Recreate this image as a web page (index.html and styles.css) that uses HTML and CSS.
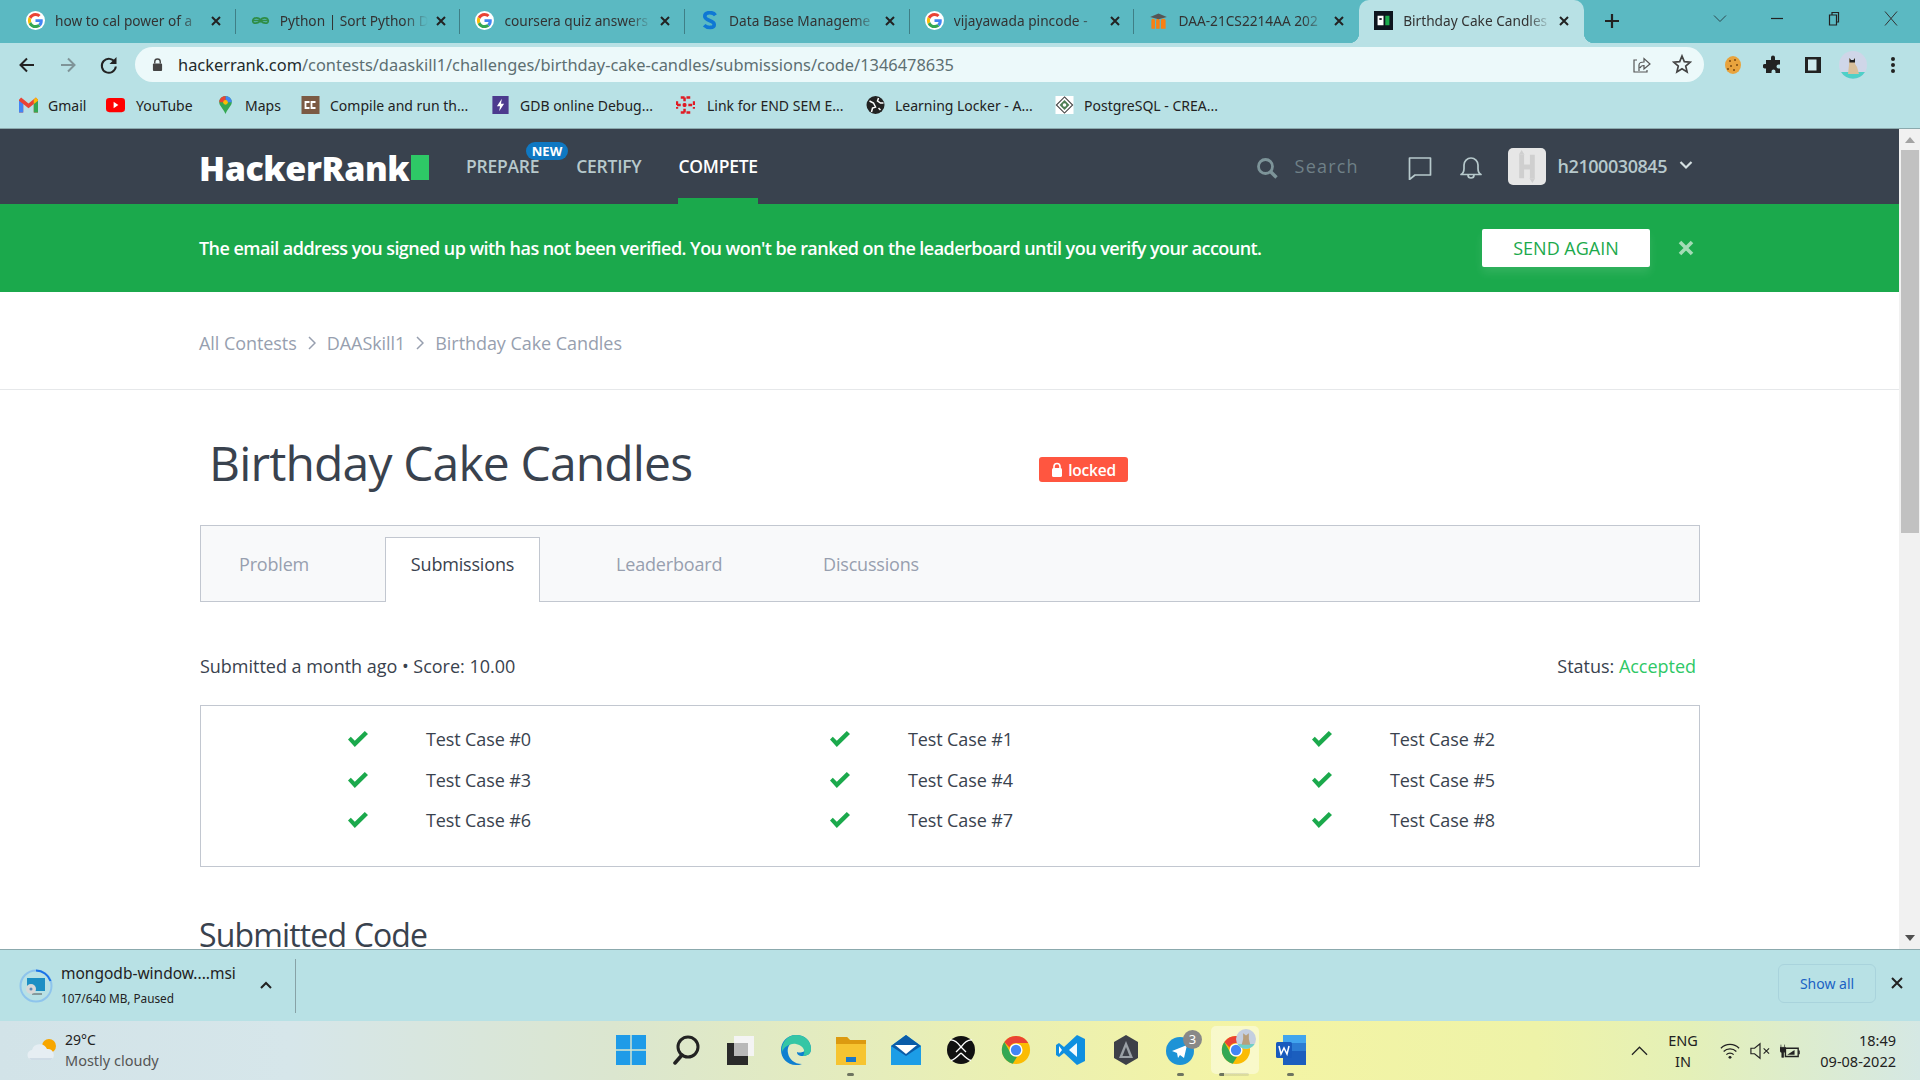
FILE: index.html
```html
<!DOCTYPE html>
<html lang="en">
<head>
<meta charset="utf-8">
<title>Birthday Cake Candles</title>
<link rel="stylesheet" href="styles.css">
</head>
<body>
<svg class="defs" width="0" height="0" aria-hidden="true">
  <symbol id="g" viewBox="-6 -6 60 60">
    <circle cx="24" cy="24" r="30" fill="#fff"/>
    <path fill="#EA4335" d="M24 9.500c3.540 0 6.710 1.220 9.210 3.600l6.850-6.850C35.900 2.380 30.470 0 24 0 14.620 0 6.510 5.380 2.560 13.220l7.980 6.190C12.430 13.720 17.740 9.500 24 9.500z"/>
    <path fill="#4285F4" d="M46.980 24.550c0-1.570-.15-3.090-.38-4.550H24v9.020h12.940c-.58 2.960-2.260 5.480-4.780 7.180l7.730 6c4.510-4.180 7.090-10.360 7.090-17.650z"/>
    <path fill="#FBBC05" d="M10.530 28.590c-.48-1.450-.76-2.990-.76-4.590s.27-3.140.76-4.590l-7.980-6.190C.92 16.460 0 20.120 0 24c0 3.880.92 7.540 2.560 10.780l7.970-6.190z"/>
    <path fill="#34A853" d="M24 48c6.480 0 11.930-2.130 15.890-5.810l-7.730-6c-2.150 1.450-4.920 2.300-8.160 2.300-6.260 0-11.570-4.220-13.470-9.910l-7.980 6.190C6.510 42.620 14.620 48 24 48z"/>
  </symbol>
  <symbol id="x" viewBox="0 0 12 12"><path d="M2 2l8 8M10 2l-8 8" stroke="currentColor" stroke-width="2" fill="none"/></symbol>
  <symbol id="check" viewBox="0 0 20 16"><path fill="#1ba94c" d="M0 8.500l2.800-2.800 4 4L16.800 0 20 3 6.800 16z"/></symbol>
  <symbol id="chrome" viewBox="0 0 32 32">
    <circle cx="16" cy="16" r="15" fill="#fbbc04"/>
    <path d="M16 1a15 15 0 0 1 13 7.500H16a7.500 7.500 0 0 0-7 4.500L3.500 7.500A15 15 0 0 1 16 1z" fill="#ea4335"/>
    <path d="M3.500 7.500L10 19a7.500 7.500 0 0 0 7 4.400L12.500 30.600A15 15 0 0 1 3.500 7.500z" fill="#34a853"/>
    <circle cx="16" cy="16" r="7" fill="#fff"/><circle cx="16" cy="16" r="5.500" fill="#4285f4"/>
  </symbol>
</svg>

<header class="chrome">
  <div class="tabstrip">
    <div class="tab"><svg class="fav"><use href="#g"/></svg><span class="tab-title">how to cal power of a</span><svg class="tab-x"><use href="#x"/></svg></div>
    <div class="tab"><svg class="fav" viewBox="0 0 16 16"><path d="M8 8c-1-3-6-3-6.500 0S6 11 8 8c2 3 7 3 6.500 0S9 5 8 8zM1.500 8h13" fill="none" stroke="#2f8d46" stroke-width="1.400"/></svg><span class="tab-title">Python | Sort Python D</span><svg class="tab-x"><use href="#x"/></svg></div>
    <div class="tab"><svg class="fav"><use href="#g"/></svg><span class="tab-title">coursera quiz answers</span><svg class="tab-x"><use href="#x"/></svg></div>
    <div class="tab"><svg class="fav" viewBox="0 0 16 16"><path d="M13 3.500C11 .5 4 .5 4 4.500c0 4 8 3 8 7 0 3-6 3-8.500.5" fill="none" stroke="#0f78d4" stroke-width="3"/></svg><span class="tab-title">Data Base Manageme</span><svg class="tab-x"><use href="#x"/></svg></div>
    <div class="tab"><svg class="fav"><use href="#g"/></svg><span class="tab-title">vijayawada pincode -</span><svg class="tab-x"><use href="#x"/></svg></div>
    <div class="tab tab-last"><svg class="fav" viewBox="0 0 16 16"><path d="M2 15V8c0-2 3-2 3 0v7zM6 15V8c0-2 3-2 3 0v7zM10 15V8c0-2 4-2 4 0v7z" fill="#f98012"/><path d="M1 5l7-3 7 3-7 2z" fill="#555"/></svg><span class="tab-title">DAA-21CS2214AA 202</span><svg class="tab-x"><use href="#x"/></svg></div>
    <div class="tab tab-active"><svg class="fav" viewBox="0 0 16 16"><rect width="16" height="16" fill="#0e141e"/><rect x="3" y="4" width="5" height="8" fill="#fff"/><rect x="4.500" y="6" width="2" height="1.500" fill="#0e141e"/><rect x="9.500" y="4" width="3.500" height="8" fill="#1ba94c"/></svg><span class="tab-title">Birthday Cake Candles</span><svg class="tab-x"><use href="#x"/></svg></div>
    <svg class="newtab" viewBox="0 0 16 16"><path d="M8 1v14M1 8h14" stroke="#222" stroke-width="2.200"/></svg>
    <div class="winctl">
      <svg viewBox="0 0 14 14"><path d="M1 4l6 6 6-6" fill="none" stroke="#2c4a50"/></svg>
      <svg viewBox="0 0 14 14"><path d="M1 7h12" stroke="#222" stroke-width="1.200"/></svg>
      <svg viewBox="0 0 14 14"><path d="M2.500 3.500h7v10h-7zM5 3.500V1h6.500v9.500H9.500" fill="none" stroke="#222" stroke-width="1.200"/></svg>
      <svg viewBox="0 0 14 14"><path d="M1 0l12 14M13 0L1 14" stroke="#333" stroke-width="1"/></svg>
    </div>
  </div>
  <div class="toolbar">
    <svg class="tool" viewBox="0 0 20 20"><path d="M17 10H4M10 3.500L3.500 10l6.500 6.500" fill="none" stroke="#222" stroke-width="2"/></svg>
    <svg class="tool" viewBox="0 0 20 20"><path d="M3 10h13M10 3.500l6.500 6.500-6.500 6.500" fill="none" stroke="#7f9498" stroke-width="2"/></svg>
    <svg class="tool" viewBox="0 0 20 20"><path d="M16 7.500a7 7 0 1 0 .8 4" fill="none" stroke="#222" stroke-width="2"/><path d="M17.500 2v7h-7z" fill="#222"/></svg>
    <div class="omnibox">
      <svg class="lock" viewBox="0 0 12 14"><path d="M3 6V4a3 3 0 0 1 6 0v2" fill="none" stroke="#444" stroke-width="1.500"/><rect x="1" y="6" width="10" height="8" rx="1" fill="#444"/></svg>
      <span class="url"><b>hackerrank.com</b>/contests/daaskill1/challenges/birthday-cake-candles/submissions/code/1346478635</span>
      <svg class="omni-ic" viewBox="0 0 20 20"><path d="M7 17V11c0-2 2-3 5-3V4.500l6 5.500-6 5v-3.500c-2 0-3.500 1-4 2.500M5 6H2v12h13v-2" fill="none" stroke="#555" stroke-width="1.200"/></svg>
      <svg class="omni-ic" viewBox="0 0 20 20"><path d="M10 2l2.300 5.600 6 .5-4.600 3.900 1.400 5.900-5.100-3.100-5.100 3.100 1.400-5.900L1.700 8.100l6-.5z" fill="none" stroke="#444" stroke-width="1.700"/></svg>
    </div>
    <div class="ext">
      <svg viewBox="0 0 20 20"><ellipse cx="10" cy="10" rx="8" ry="9" fill="#e8a33d"/><g fill="#7a4a12"><circle cx="7" cy="6" r="1"/><circle cx="12" cy="5" r="1"/><circle cx="14" cy="10" r="1"/><circle cx="8" cy="11" r="1"/><circle cx="11" cy="15" r="1"/><circle cx="5" cy="14" r="1"/></g></svg>
      <svg viewBox="0 0 20 20"><path d="M8 2.500a2 2 0 0 1 4 0V5h5v4.500h-1.500a2 2 0 0 0 0 4H17V18H12.500v-1.500a2 2 0 0 0-4 0V18H3v-4.500H1.500a2.300 2.300 0 0 1 0-4.500H3V5h5z" fill="#222"/></svg>
      <svg viewBox="0 0 20 20"><path d="M2 2h16v16H2z" fill="#222"/><path d="M5 4.500h8.500v11H5z" fill="#d0eaee"/></svg>
      <svg class="avatar" viewBox="0 0 28 28"><circle cx="14" cy="14" r="14" fill="#cfd6e8"/><path d="M2 21h24a14 14 0 0 1-24 0z" fill="#4fd0c8"/><path d="M10 7l1.500 2h3L16 7v6l2 3 2 7H9l1-9z" fill="#d8bf9a"/><path d="M10.500 7l1.500 2h2.500L16 7v4.500h-5.500z" fill="#222"/></svg>
      <svg viewBox="0 0 20 20"><g fill="#222"><circle cx="10" cy="4" r="2"/><circle cx="10" cy="10" r="2"/><circle cx="10" cy="16" r="2"/></g></svg>
    </div>
  </div>
  <div class="bookmarks">
    <a class="bm bm-1"><svg viewBox="0 0 18 14"><path d="M0 2v12h4V6l5 4 5-4v8h4V2l-2-2-7 5.500L2 0z" fill="#ea4335"/><path d="M0 3v11h4V6z" fill="#4285f4"/><path d="M14 6v8h4V3z" fill="#34a853"/><path d="M14 2l2-2 2 2v1l-4 3z" fill="#fbbc04"/></svg>Gmail</a>
    <a class="bm bm-2"><svg viewBox="0 0 20 16"><rect width="20" height="15" y=".5" rx="3.500" fill="#f00"/><path d="M8 4.500l5 3.500-5 3.500z" fill="#fff"/></svg>YouTube</a>
    <a class="bm bm-3"><svg viewBox="0 0 14 20"><path d="M7 0a7 7 0 0 1 7 7c0 4-4 6-7 13C4 13 0 11 0 7a7 7 0 0 1 7-7z" fill="#34a853"/><path d="M7 0a7 7 0 0 1 7 7H7z" fill="#4285f4"/><path d="M0 7a7 7 0 0 1 7-7v7z" fill="#ea4335"/><circle cx="7" cy="7" r="2.600" fill="#fbbc04"/></svg>Maps</a>
    <a class="bm bm-4"><svg viewBox="0 0 18 18"><rect width="18" height="18" fill="#7b5a44"/><path d="M8 6H4v6h4M14 6h-4v6h4" fill="none" stroke="#fff" stroke-width="1.800"/></svg>Compile and run th...</a>
    <a class="bm bm-5"><svg viewBox="0 0 18 20"><rect width="18" height="20" fill="#4c3a8e"/><path d="M10.500 3L5 11.500h3.500L7.500 17 13 8.500H9.500z" fill="#fff"/></svg>GDB online Debug...</a>
    <a class="bm bm-6"><svg viewBox="0 0 20 18"><path d="M5 1h10M5 17h10M1 5v8M19 5v8M9 1v16M1 9h18" fill="none" stroke="#e01b24" stroke-width="2.600" stroke-dasharray="4 2"/></svg>Link for END SEM E...</a>
    <a class="bm bm-7"><svg viewBox="0 0 18 18"><circle cx="9" cy="9" r="9" fill="#222"/><path d="M3 5l4 2 2 4-3 1-1 4M12 2l-1 3 3 2 3 0M12 12l2 2" fill="none" stroke="#fff" stroke-width="1.500"/></svg>Learning Locker - A...</a>
    <a class="bm bm-8"><svg viewBox="0 0 20 20"><rect width="20" height="20" fill="#fff"/><path d="M10 1l9 9-9 9-9-9z" fill="none" stroke="#444" stroke-width="1.200"/><path d="M10 4.500l5.500 5.500-5.500 5.500L4.500 10z" fill="#4f7f55"/><circle cx="10" cy="10" r="2" fill="#fff"/></svg>PostgreSQL - CREA...</a>
  </div>
</header>

<div class="viewport">
  <main class="page">
    <nav class="topnav">
      <div class="logo">HackerRank<span class="logo-sq"></span></div>
      <a class="nav-item nav-prepare">PREPARE<span class="new-badge">NEW</span></a>
      <a class="nav-item nav-certify">CERTIFY</a>
      <a class="nav-item nav-active">COMPETE</a>
      <div class="nav-right">
        <svg class="nav-search-ic" viewBox="0 0 22 22"><circle cx="9.500" cy="9.500" r="7" fill="none" stroke="#7d9499" stroke-width="2.800"/><path d="M14.500 14.500l6 6" stroke="#7d9499" stroke-width="3.400"/></svg>
        <span class="nav-search">Search</span>
        <svg class="nav-chat" viewBox="0 0 24 24"><path d="M1.500 2h21v17H7l-5.500 4.500z" fill="none" stroke="#b7c9cc" stroke-width="1.700" stroke-linejoin="round"/></svg>
        <svg class="nav-bell" viewBox="0 0 24 24"><path d="M2 18.500c2-1 3-3 3-6V9a7 7 0 0 1 14 0v3.500c0 3 1 5 3 6zM9 19a3 3 0 0 0 6 0" fill="none" stroke="#b7c9cc" stroke-width="1.700" stroke-linejoin="round"/></svg>
        <div class="nav-avatar"><svg viewBox="0 0 38 38"><path d="M11 7h5v10h6V7h5v24h-5V22h-6v9h-5z" fill="#cfcfcf"/><path d="M13.500 2l3 5h-6zM24.500 36l3-5h-6z" fill="#cfcfcf"/></svg></div>
        <span class="nav-user">h2100030845</span>
        <svg class="nav-caret" viewBox="0 0 14 10"><path d="M1.500 2L7 7.500 12.500 2" fill="none" stroke="#d5e0e2" stroke-width="2.200"/></svg>
      </div>
    </nav>
    <div class="verify">
      <p class="verify-text">The email address you signed up with has not been verified. You won't be ranked on the leaderboard until you verify your account.</p>
      <button class="send-again">SEND AGAIN</button>
      <svg class="verify-x" viewBox="0 0 16 16"><path d="M2 2l12 12M14 2L2 14" stroke="#a4dcb6" stroke-width="3.600"/></svg>
    </div>
    <div class="crumbs">
      <a>All Contests</a><svg viewBox="0 0 8 14"><path d="M1 1l6 6-6 6" fill="none" stroke="#979faf" stroke-width="1.500"/></svg>
      <a>DAASkill1</a><svg viewBox="0 0 8 14"><path d="M1 1l6 6-6 6" fill="none" stroke="#979faf" stroke-width="1.500"/></svg>
      <a>Birthday Cake Candles</a>
    </div>
    <div class="content">
      <div class="title-row">
        <h1>Birthday Cake Candles</h1>
        <span class="locked"><svg viewBox="0 0 12 15"><path d="M3 7V4.500a3 3 0 0 1 6 0V7" fill="none" stroke="#fff" stroke-width="1.600"/><rect x="1" y="6" width="10" height="9" rx="1.500" fill="#fff"/></svg>locked</span>
      </div>
      <div class="tabs">
        <a class="ctab ctab-problem">Problem</a>
        <a class="ctab ctab-on">Submissions</a>
        <a class="ctab ctab-leader">Leaderboard</a>
        <a class="ctab ctab-disc">Discussions</a>
      </div>
      <div class="status-row">
        <span class="submitted">Submitted a month ago • Score: 10.00</span>
        <span class="status">Status: <em>Accepted</em></span>
      </div>
      <div class="cases">
        <div class="case"><svg><use href="#check"/></svg>Test Case #0</div>
        <div class="case"><svg><use href="#check"/></svg>Test Case #1</div>
        <div class="case"><svg><use href="#check"/></svg>Test Case #2</div>
        <div class="case"><svg><use href="#check"/></svg>Test Case #3</div>
        <div class="case"><svg><use href="#check"/></svg>Test Case #4</div>
        <div class="case"><svg><use href="#check"/></svg>Test Case #5</div>
        <div class="case"><svg><use href="#check"/></svg>Test Case #6</div>
        <div class="case"><svg><use href="#check"/></svg>Test Case #7</div>
        <div class="case"><svg><use href="#check"/></svg>Test Case #8</div>
      </div>
      <h2>Submitted Code</h2>
    </div>
  </main>
  <div class="scrollbar">
    <svg class="sb-arrow" viewBox="0 0 10 6"><path d="M5 0l5 6H0z" fill="#a3a3a3"/></svg>
    <div class="sb-thumb"></div>
    <svg class="sb-arrow sb-down" viewBox="0 0 10 6"><path d="M0 0h10L5 6z" fill="#505050"/></svg>
  </div>
</div>

<section class="downloads">
  <svg class="dl-icon" viewBox="0 0 34 34">
    <circle cx="17" cy="17" r="15.500" fill="none" stroke="#8ec4ec" stroke-width="2"/>
    <path d="M17 1.500A15.500 15.500 0 0 1 31.500 12" fill="none" stroke="#1a73e8" stroke-width="2"/>
    <rect x="8" y="9" width="18" height="13" fill="#1c8fc4"/>
    <path d="M13 25h10" stroke="#555" stroke-width="1"/>
    <circle cx="12" cy="20" r="5" fill="#d8d8d8"/><circle cx="12" cy="20" r="1.500" fill="#5a88b8"/>
  </svg>
  <div class="dl-text">
    <div class="dl-name">mongodb-window....msi</div>
    <div class="dl-size">107/640 MB, Paused</div>
  </div>
  <svg class="dl-caret" viewBox="0 0 12 8"><path d="M1 7l5-5 5 5" fill="none" stroke="#222" stroke-width="2"/></svg>
  <div class="dl-sep"></div>
  <a class="dl-all">Show all</a>
  <svg class="dl-x" viewBox="0 0 12 12"><path d="M1 1l10 10M11 1L1 11" stroke="#222" stroke-width="2"/></svg>
</section>

<footer class="taskbar">
  <div class="weather">
    <svg viewBox="0 0 30 24"><circle cx="22" cy="8" r="7" fill="#f7a600"/><path d="M6 22a5 5 0 0 1-1-10 8 8 0 0 1 15-1 6 6 0 0 1 4 11z" fill="#e6eef3"/><path d="M2 20h24l-2 2H4z" fill="#cfdce6"/></svg>
    <div><div class="w-temp">29°C</div><div class="w-desc">Mostly cloudy</div></div>
  </div>
  <div class="apps">
    <span class="app"><svg viewBox="0 0 30 30"><path d="M0 0h14.300v14.300H0zM15.700 0H30v14.300H15.700zM0 15.700h14.300V30H0zM15.700 15.700H30V30H15.700z" fill="#1e9be8"/></svg></span>
    <span class="app"><svg viewBox="0 0 30 30"><circle cx="17" cy="12" r="10" fill="none" stroke="#222" stroke-width="3"/><path d="M11 20l-7 8" stroke="#222" stroke-width="3.500" stroke-linecap="round"/></svg></span>
    <span class="app"><svg viewBox="0 0 30 30"><rect x="8" y="1" width="20" height="20" fill="#f4f4f4"/><rect x="1" y="8" width="21" height="22" fill="#2a2a2a"/><rect x="8" y="8" width="14" height="13" fill="#b8b8b8"/></svg></span>
    <span class="app"><svg viewBox="0 0 30 30"><path d="M15 0c9 0 15 6 15 14 0 5-4 7-8 7-5 0-6-2-6-4 2 1 8 1 8-3 0-5-5-8-10-7C8 8 6 13 7 18c1 6 6 11 14 11-2 1-4 1-6 1C6 30 0 23 0 15S6 0 15 0z" fill="#0f7fd0"/><path d="M15 0c9 0 15 6 15 14 0 5-4 7-8 7 2-2 3-10-7-12C9 8 3 12 1 17 0 8 6 0 15 0z" fill="#35c6a5"/></svg></span>
    <span class="app app-dot"><svg viewBox="0 0 30 30"><path d="M0 2h11l3 3h16v25H0z" fill="#f6c431"/><path d="M0 2h11l3 3h16v4H0z" fill="#dc9a10"/><rect x="10" y="22" width="10" height="5" fill="#1a78c8"/></svg></span>
    <span class="app"><svg viewBox="0 0 30 30"><path d="M0 11L15 0l15 11v19H0z" fill="#1c9de6"/><path d="M0 11l15 10 15-10L15 0z" fill="#0a5ca8"/><path d="M4 10h22l-11 9z" fill="#fff"/></svg></span>
    <span class="app"><svg viewBox="0 0 30 30"><circle cx="15" cy="15" r="14" fill="#111"/><path d="M15 12C12 8 8 4.500 4 5M15 12c3-4 7-7.500 11-7M15 18c-4 4-7 7-10 7.500M15 18c4 4 7 7 10 7.500M15 12l-5 5M15 12l5 5" fill="none" stroke="#fff" stroke-width="1.300"/></svg></span>
    <span class="app"><svg><use href="#chrome"/></svg></span>
    <span class="app"><svg viewBox="0 0 30 30"><path d="M21 0l8 4v22l-8 4-13-12-5 4-3-2v-10l3-2 5 4z" fill="#0f8fe0"/><path d="M21 8l-8 7 8 7z" fill="#fff" opacity=".95"/><path d="M3 11l3 4-3 4z" fill="#fff"/></svg></span>
    <span class="app"><svg viewBox="0 0 30 30"><path d="M15 0l12 7v16l-12 7-12-7V7z" fill="#3d4048"/><path d="M15 6l7 17H8z" fill="#9aa0a6"/><path d="M15 12l3.500 9h-7z" fill="#3d4048"/></svg></span>
    <span class="app app-dot app-tg"><svg viewBox="0 0 30 30"><circle cx="14" cy="16" r="14" fill="#1d93d6"/><path d="M6 16l15-6-3 13-4-3-2 3-1-5z" fill="#fff"/></svg><i class="tg-badge">3</i></span>
    <span class="app app-open"><svg><use href="#chrome"/></svg><svg class="chrome-av" viewBox="0 0 28 28"><circle cx="14" cy="14" r="14" fill="#c4cfe0"/><path d="M2 21h24a14 14 0 0 1-24 0z" fill="#6fd0c8"/><path d="M10 6l4 3 4-3v8l2 8H8l2-8z" fill="#b89f7c"/></svg></span>
    <span class="app app-dot"><svg viewBox="0 0 30 30"><path d="M7 0h23v30H7z" fill="#1b5ebe"/><path d="M7 0h23v8H7z" fill="#41a5ee"/><path d="M7 8h23v8H7z" fill="#2b7cd3"/><rect y="7" width="16" height="16" rx="1.500" fill="#185abd"/><path d="M3 11l2 8 3-6 3 6 2-8" fill="none" stroke="#fff" stroke-width="1.500"/></svg></span>
  </div>
  <div class="tray">
    <svg class="tray-up" viewBox="0 0 18 10"><path d="M1 9l8-8 8 8" fill="none" stroke="#222" stroke-width="1.300"/></svg>
    <div class="lang">ENG<br>IN</div>
    <svg class="tray-ic" viewBox="0 0 22 18"><path d="M1 6a14 14 0 0 1 20 0M4 9.500a10 10 0 0 1 14 0M7 13a5.500 5.500 0 0 1 8 0" fill="none" stroke="#222" stroke-width="1.400"/><circle cx="11" cy="16" r="1.600" fill="#222"/></svg>
    <svg class="tray-ic" viewBox="0 0 22 18"><path d="M1 6h4l6-5v16l-6-5H1z" fill="none" stroke="#222" stroke-width="1.300"/><path d="M15 6l6 6M21 6l-6 6" stroke="#222" stroke-width="1.200"/></svg>
    <svg class="tray-ic" viewBox="0 0 22 18"><path d="M6 6h14v9H6z" fill="none" stroke="#222" stroke-width="1.500"/><path d="M21 8.500v4" stroke="#222" stroke-width="1.500"/><path d="M8 13l8-5v5z" fill="#222"/><path d="M1 2v3M5 2v3M0 5h6v3a3 3 0 0 1-2 3v5H2v-5a3 3 0 0 1-2-3z" fill="#222" stroke="#222" stroke-width=".7"/></svg>
    <div class="clock">18:49<br>09-08-2022</div>
  </div>
</footer>
</body>
</html>
```
FILE: styles.css
```css
* { box-sizing: border-box; }
html, body { margin: 0; height: 100%; }
body {
  display: flex;
  flex-direction: column;
  width: 1920px;
  height: 1080px;
  overflow: hidden;
  background: #fff;
  font-family: "Open Sans", "Noto Sans", sans-serif;
  color: #39424e;
}
.defs { position: absolute; }
a { color: inherit; text-decoration: none; }

/* browser chrome */
.chrome { flex: 0 0 129px; background: #b8e1e5; border-bottom: 1px solid #8ba9ad; font-family: "Noto Sans", sans-serif; color: #222; }
.tabstrip { height: 43px; background: #5bb9c2; display: flex; padding-left: 11px; }
.tab { flex: 0 0 224.700px; height: 43px; display: flex; align-items: center; padding: 0 0 2px 15px; position: relative; font-size: 13.700px; }
.tab::after { content: ""; position: absolute; right: 0; top: 9px; height: 25px; width: 1px; background: #3f7f86; }
.tab-last::after { display: none; }
.tab-active { background: #b8e1e5; border-radius: 10px 10px 0 0; }
.tab-active::after { display: block; right: -10px; top: 33px; width: 10px; height: 10px; background: radial-gradient(circle at 100% 0, transparent 10px, #b8e1e5 10.500px); }
.tab-active::before { content: ""; position: absolute; left: -10px; top: 33px; width: 10px; height: 10px; background: radial-gradient(circle at 0 0, transparent 10px, #b8e1e5 10.500px); }
.fav { width: 19px; height: 19px; flex: none; }
.tab-title { width: 148px; margin-left: 10px; white-space: nowrap; overflow: hidden; color: #333;
  -webkit-mask-image: linear-gradient(90deg, #000 84%, transparent); mask-image: linear-gradient(90deg, #000 84%, transparent); }
.tab-x { width: 12px; height: 12px; margin-left: 7px; flex: none; color: #222; }
.newtab { width: 16px; height: 16px; margin: 13px 0 0 20px; }
.winctl { margin-left: auto; display: flex; height: 43px; align-items: flex-start; padding: 11px 22px 0 0; gap: 43px; }
.winctl svg { width: 14px; height: 15px; flex: none; }

.toolbar { height: 43px; display: flex; align-items: center; padding: 0 20px 0 17px; }
.tool { width: 20px; height: 20px; margin-right: 21px; flex: none; }
.omnibox { height: 35px; flex: 0 0 1569px; margin: -1px 0 0 -5px; border-radius: 18px; background: #ecf9fa; display: flex; align-items: center; padding-left: 17px; }
.lock { width: 11px; height: 13px; flex: none; }
.url { margin-left: 15px; font-size: 16.400px; color: #5d6f72; white-space: nowrap; }
.url b { font-weight: 400; color: #1e2a2c; }
.omni-ic { width: 20px; height: 20px; flex: none; }
.url + .omni-ic { margin-left: auto; margin-right: 20px; }
.omni-ic:last-child { margin-right: 12px; }
.ext { display: flex; align-items: center; margin-left: 19px; gap: 20px; }
.ext svg { width: 20px; height: 20px; flex: none; }
.ext .avatar { width: 28px; height: 28px; margin: 0 -4px; }

.bookmarks { height: 42px; display: flex; align-items: center; padding: 0 0 4px 19px; font-size: 14px; color: #222; }
.bm { display: flex; align-items: center; gap: 10px; white-space: nowrap; height: 20px; }
.bm svg { width: 19px; height: 18px; flex: none; }
.bm-1 { width: 87px; } .bm-2 { width: 110px; } .bm-3 { width: 85px; } .bm-4 { width: 190px; }
.bm-5 { width: 185px; } .bm-6 { width: 190px; } .bm-7 { width: 189px; } .bm-8 { width: 200px; }
.bm-2 svg { margin-right: 1px; }
.bm-6 svg { margin-right: 2px; }

/* page */
.viewport { flex: 1; display: flex; min-height: 0; }
.page { flex: 1; min-width: 0; overflow: hidden; }
.scrollbar { flex: 0 0 21px; background: #f1f1f1; display: flex; flex-direction: column; align-items: center; position: relative; padding-top: 8px; }
.sb-arrow { width: 10px; height: 6px; flex: none; }
.sb-thumb { width: 18px; height: 383px; margin-top: 7px; background: #c1c1c1; }
.sb-down { margin-top: auto; margin-bottom: 8px; }

.topnav { height: 75px; background: #39424e; display: flex; align-items: center; padding-left: 199px; position: relative; }
.logo { width: 267px; font-size: 34px; font-weight: 800; color: #fff; display: flex; align-items: center; line-height: 1; letter-spacing: -.4px; padding-top: 2px; }
.logo-sq { width: 18px; height: 25px; background: #2ec866; margin-left: 2px; }
.nav-item { font-size: 17.500px; font-weight: 600; color: #b7c9cc; position: relative; height: 75px; line-height: 75px; flex: none; letter-spacing: -.25px; }
.nav-certify { margin-left: 37px; }
.nav-active { margin-left: 37px; color: #fff; border-bottom: 6px solid #1ba94c; }
.new-badge { position: absolute; left: 60px; top: 13px; width: 42px; height: 18px; border-radius: 9px; background: #0f78c2; color: #fff; font-size: 13px; font-weight: 700; line-height: 18px; text-align: center; letter-spacing: 0; }
.nav-right { margin-left: auto; display: flex; align-items: center; }
.nav-search-ic { width: 22px; height: 22px; margin-top: 2px; }
.nav-search { margin: -1px 0 0 17px; width: 113px; font-size: 18px; letter-spacing: 1.200px; color: #6f8087; }
.nav-chat { width: 24px; height: 24px; margin-top: 2px; }
.nav-bell { width: 24px; height: 24px; margin: 2px 0 0 27px; }
.nav-avatar { width: 38px; height: 37px; margin-left: 25px; border-radius: 5px; background: #e6e6e6; }
.nav-avatar svg { width: 38px; height: 37px; display: block; }
.nav-user { margin: -2px 0 0 12px; font-size: 18px; font-weight: 600; color: #b7c9cc; letter-spacing: -.45px; }
.nav-caret { width: 14px; height: 10px; margin: -3px 206px 0 12px; }

.verify { height: 88px; background: #1ba94c; display: flex; align-items: center; padding-left: 199px; }
.verify-text { margin: 0; width: 1283px; font-size: 18px; font-weight: 600; color: #fff; white-space: nowrap; letter-spacing: -.55px; }
.send-again { width: 168px; height: 38px; border: 0; border-radius: 2px; background: #fff; color: #1ba94c; font: 400 18px "Open Sans", sans-serif; box-shadow: 0 6px 10px rgba(255,255,255,.1); padding: 0; }
.verify-x { width: 16px; height: 16px; margin-left: 28px; }

.crumbs { height: 98px; border-bottom: 1px solid #e6e8ea; display: flex; align-items: center; padding: 5px 0 0 199px; gap: 11px; font-size: 18px; color: #979faf; letter-spacing: -.06px; }
.crumbs svg { width: 8px; height: 14px; }

.content { padding: 0 199px 0 200px; }
.title-row { height: 135px; display: flex; align-items: flex-start; padding: 43px 0 0 9px; }
.title-row h1 { margin: 0; flex: 0 0 830px; font-size: 48px; font-weight: 500; line-height: 60px; letter-spacing: -.85px; }
.locked { margin-top: 24px; width: 89px; height: 25px; border-radius: 3px; background: #ff5640; color: #fff; font-size: 15.500px; font-weight: 600; display: flex; align-items: center; justify-content: center; gap: 5px; letter-spacing: -.2px; }
.locked svg { width: 12px; height: 15px; }

.tabs { height: 77px; border: 1px solid #c2c7d0; background: #f8f9fa; display: flex; align-items: flex-end; }
.ctab { height: 64px; font-size: 18px; line-height: 54px; color: #979faf; flex: none; letter-spacing: -.18px; }
.ctab-problem { width: 184px; padding-left: 38px; }
.ctab-on { width: 155px; margin-bottom: -1px; height: 65px; line-height: 52px; text-align: center; color: #39424e; background: #fff; border: 1px solid #c2c7d0; border-bottom: 0; }
.ctab-leader { margin-left: 76px; width: 207px; }

.status-row { height: 103px; padding: 52px 4px 0 0; display: flex; justify-content: space-between; align-items: flex-start; font-size: 18px; line-height: 24px; }
.status em { font-style: normal; color: #2ec866; }
.submitted, .status { font-weight: 500; letter-spacing: -.02px; }
.cases { height: 162px; border: 1px solid #c2c7d0; padding: 13px 0 0 147px; display: grid; grid-template-columns: repeat(3, 482px); grid-auto-rows: 40.500px; align-items: center; font-size: 18px; letter-spacing: -.12px; }
.case { display: flex; align-items: center; gap: 58px; }
.case svg { width: 20px; height: 16px; flex: none; }

h2 { margin: 46px 0 0 -1px; font-size: 32px; font-weight: 500; line-height: 44px; letter-spacing: -.85px; }

/* download bar */
.downloads { flex: 0 0 72px; background: #b8e1e5; border-top: 1px solid #8ba9ad; display: flex; align-items: center; padding-left: 19px; font-family: "Noto Sans", sans-serif; color: #222; }
.dl-icon { width: 34px; height: 34px; flex: none; }
.dl-text { margin-left: 8px; width: 199px; flex: none; }
.dl-name { font-size: 15.500px; line-height: 22px; margin-top: -2px; }
.dl-size { font-size: 11.800px; line-height: 20px; margin-top: 4px; }
.dl-caret { width: 12px; height: 8px; flex: none; margin-top: -2px; }
.dl-sep { width: 1px; height: 54px; background: #87a2a6; margin-left: 23px; flex: none; }
.dl-all { margin: -5px 0 0 auto; width: 98px; height: 39px; border: 1px solid #a9d3dc; border-radius: 6px; color: #1a62c4; font-size: 14px; line-height: 37px; text-align: center; }
.dl-x { width: 12px; height: 12px; margin: -5px 17px 0 15px; flex: none; }

/* taskbar */
.taskbar { flex: 0 0 59px; display: flex; align-items: center; font-family: "Noto Sans", sans-serif; color: #222;
  background: linear-gradient(90deg, #d2e3e8 0%, #d6e6ea 15%, #dbe6cf 32%, #e9efb5 50%, #f4f4a4 65%, #eef3a8 80%, #e4f0b8 88%, #d5e8e4 100%); }
.weather { flex: 0 0 603px; display: flex; align-items: center; padding: 0 0 1px 27px; gap: 8px; }
.weather svg { width: 30px; height: 24px; }
.w-temp { font-size: 14px; line-height: 20px; }
.w-desc { font-size: 14.500px; line-height: 20px; color: #555; }
.apps { display: flex; }
.app { width: 55px; height: 59px; display: flex; align-items: center; justify-content: center; position: relative; padding-bottom: 2px; }
.app svg { width: 30px; height: 30px; }
.app-dot::after { content: ""; position: absolute; left: 24px; bottom: 4px; width: 7px; height: 3px; border-radius: 2px; background: #6e7460; }
.app-tg .tg-badge { position: absolute; left: 30px; top: 9px; width: 19px; height: 19px; border-radius: 50%; background: #888; color: #fff; font-size: 13px; line-height: 19px; text-align: center; font-style: normal; }
.app-open::before { content: ""; position: absolute; left: 3px; top: 5px; width: 48px; height: 48px; border-radius: 5px; background: rgba(255,255,255,.42); }
.app-open::after { content: ""; position: absolute; left: 11px; bottom: 4px; width: 30px; height: 3px; border-radius: 2px; background: linear-gradient(90deg, #6e7460 0 5px, rgba(150,150,130,.25) 5px); }
.app-open svg { position: relative; }
.app .chrome-av { position: absolute; left: 28px; top: 8px; width: 20px; height: 20px; }
.tray { margin-left: auto; display: flex; align-items: center; padding-right: 24px; }
.tray-up { width: 17px; height: 10px; }
.lang { margin-left: 12px; width: 46px; text-align: center; font-size: 14.500px; line-height: 21px; }
.tray-ic { width: 20px; height: 18px; margin-left: 10px; }
.lang + .tray-ic { margin-left: 14px; }
.clock { margin-left: 14px; width: 82px; text-align: right; font-size: 14.500px; line-height: 21px; white-space: nowrap; }
```
